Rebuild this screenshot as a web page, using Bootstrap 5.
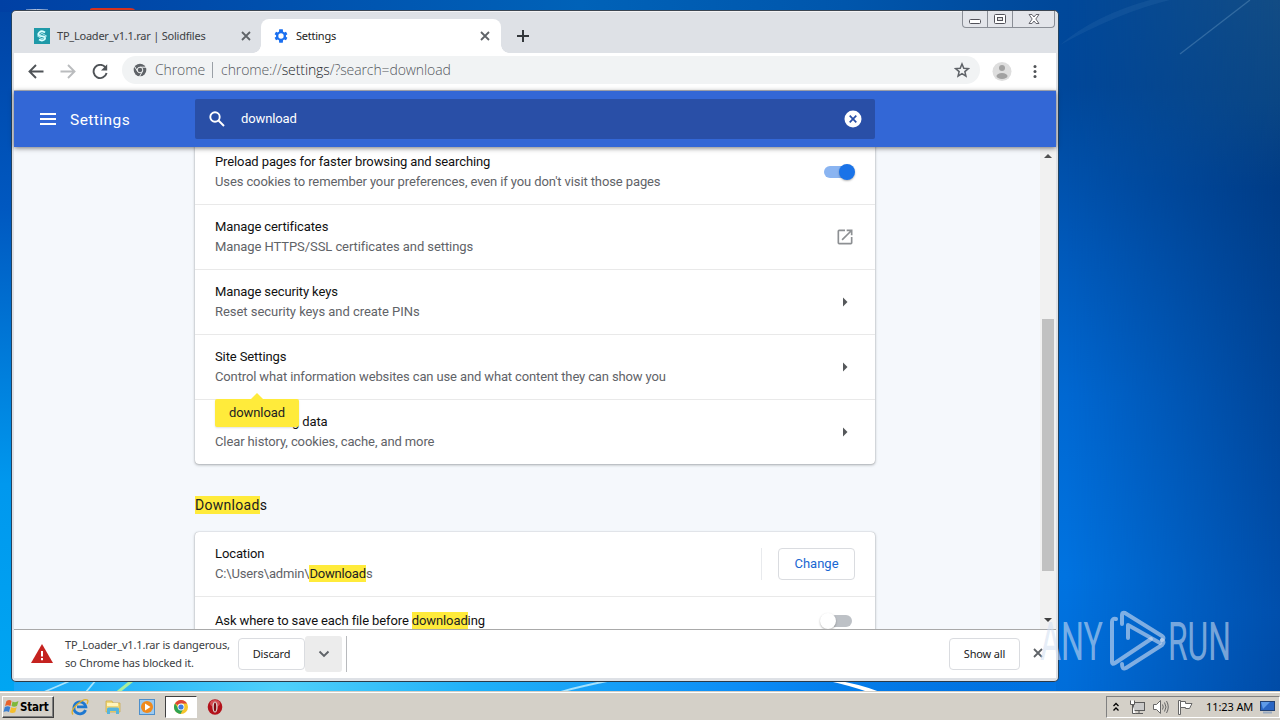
<!DOCTYPE html>
<html lang="en">
<head>
<meta charset="utf-8">
<title>Settings</title>
<link href="https://cdn.jsdelivr.net/npm/bootstrap@5.3.0/dist/css/bootstrap.min.css" rel="stylesheet">
<style>
html,body{height:720px;overflow:hidden}
body{width:1280px;font-family:Roboto,"Liberation Sans",sans-serif;font-size:13px;line-height:20px;color:#111;background:#0060c8}
svg{display:block;flex:none}
.wallpaper{left:0;top:0}
.win{left:11px;top:10px;width:1048px;height:672px;border:1px solid #2b3f55;border-color:#3c4652 #24435f #2c3a48 #24435f;border-radius:5px;background:#dee1e6;padding:0 2px 3px 2px;box-shadow:inset 0 1px #f4f4f6}
.ui{font-family:"Noto Sans","Open Sans",sans-serif}
.strip{height:42px;padding-top:8px}
.tab{height:34px;width:247px;padding:0 9px 0 20px;font-size:11px;letter-spacing:-.23px;color:#3c4043}
.tab.on{width:240px;padding:0 10px 0 12px;background:#fff;border-radius:8px 8px 0 0;color:#222;position:relative}
.tab.on::before,.tab.on::after{content:"";position:absolute;bottom:0;width:8px;height:8px}
.tab.on::before{left:-8px;background:radial-gradient(circle at 0 0,transparent 7.5px,#fff 8px)}
.tab.on::after{right:-8px;background:radial-gradient(circle at 100% 0,transparent 7.5px,#fff 8px)}
.tab span{margin-left:7px}
.caption-btns{top:0;right:3px;width:93px;height:17px;border:1px solid #8a8e96;border-top:0;border-radius:0 0 4px 4px;background:#e3e5ea}
.caption-btns span{border-right:1px solid #8a8e96;height:16px;flex:0 0 25px}
.caption-btns span:last-child{border:0;flex:1}
.tools{height:38px;background:#fff;border-bottom:1px solid #b9bcc6;padding:0 14px 0 14px}
.omni{width:858px;height:28px;margin-left:14px;border-radius:14px;background:#f1f3f4;font-family:"Open Sans","Noto Sans",sans-serif;font-size:14px;font-weight:300;letter-spacing:-.1px;color:#55595e;padding:0 10px 0 11px}
.omni span{position:relative}
.head{height:56px;background:#3367d6;padding-left:24px;color:#fff;z-index:2;box-shadow:0 1px 5px rgba(0,0,0,.55)}
.brand{width:125px;font-size:15.5px;letter-spacing:.45px;padding-top:2px}
.find{width:680px;height:40px;background:#294fa7;border-radius:2px;padding:0 13px;letter-spacing:-.12px}
.view{height:482px;background:#f5f8fc}
.pane{width:680px;margin-left:181px;letter-spacing:-.11px}
.panel{background:#fff;border-radius:4px;box-shadow:0 0 1px rgba(60,64,67,.45),0 1px 3px rgba(60,64,67,.4)}
.line{height:65px;padding:0 20px;border-top:1px solid #e9e9e9}
.sub{color:#5f6368}
.hit{background:#ffeb3b;color:#222;padding:1px 0}
.tip{left:20px;top:260px;width:84px;height:28px;background:#ffeb3b;border-radius:2px;line-height:27px;color:#222;box-shadow:0 1px 2px rgba(0,0,0,.12)}
.tip::before{content:"";position:absolute;left:36px;top:-6px;border:6px solid transparent;border-top:0;border-bottom-color:#ffeb3b}
.sw{width:28px;height:12px;border-radius:6px;background:#8ab4f1;position:relative;margin-right:3px}
.sw i{position:absolute;width:16px;height:16px;border-radius:8px;background:#1a73e8;top:-2px;right:-3px;box-shadow:0 1px 2px rgba(0,0,0,.3)}
.sw.off{background:#bdc1c6}
.sw.off i{background:#fff;right:auto;left:-4px}
.outl{border:1px solid #dadce0;border-radius:4px;background:#fff}
.rail{width:16px;background:#f1f1f1;height:482px;padding:6px 0}
.thumb{width:12px;height:252px;background:#c1c1c1;margin:161px auto 0 2px}
.shelf{height:49px;background:#fff;border-top:1px solid #a9a9a9;font-size:11px;letter-spacing:-.17px;color:#3c4043;padding-left:17px}
.dl{font-size:14px;line-height:20px;font-weight:400;margin-top:31px;letter-spacing:.3px;padding-bottom:17px}
.chg{width:77px;height:32px;line-height:30px;color:#1967d2;letter-spacing:0}
.warn{width:173px;line-height:18px;white-space:nowrap}
.dis{width:67px;height:32px;line-height:30px;color:#222}
.chev{width:37px;height:36px;background:#ececec;border-radius:3px}
.sh{width:71px;height:32px;line-height:30px;color:#222;margin-bottom:1px}
.taskbar{left:0;top:692px;width:1280px;height:28px;background:#d4d0c8;border-top:1px solid #fff;box-shadow:0 -1px #d4d0c8}
.start{width:52px;height:22px;border:1px solid;border-color:#fff #404040 #404040 #fff;box-shadow:inset -1px -1px #808080;font:bold 11.5px/20px "DejaVu Sans Condensed","DejaVu Sans",sans-serif;letter-spacing:-.2px;color:#000}
.press{width:32px;height:22px;background:#fff;border:1px solid;border-color:#404040 #fff #fff #404040}
.tray{width:174px;height:22px;border:1px solid;border-color:#808080 #fff #fff #808080;font-size:11px;letter-spacing:-.1px;color:#000}
.wm{left:1036px;top:604px}
</style>
</head>
<body class="position-relative">
<svg class="wallpaper position-absolute" width="1280" height="720" viewBox="0 0 1280 720">
<defs>
<linearGradient id="b" x1="0" y1="0" x2="0" y2="1"><stop offset="0" stop-color="#0a4aa4"/><stop offset=".45" stop-color="#005cc4"/><stop offset="1" stop-color="#0074e4"/></linearGradient>
<radialGradient id="g" gradientUnits="userSpaceOnUse" cx="280" cy="690" r="780" gradientTransform="translate(0 140) scale(1 .8)"><stop offset="0" stop-color="#50d0fa"/><stop offset=".25" stop-color="#20b0f8"/><stop offset=".6" stop-color="#0c8cf6"/><stop offset="1" stop-color="#0070e0" stop-opacity="0"/></radialGradient>
<linearGradient id="ra" x1="0" y1="0" x2="0" y2="1"><stop offset="0" stop-color="#00489a"/><stop offset=".12" stop-color="#00479a"/><stop offset=".35" stop-color="#0059ba"/><stop offset=".55" stop-color="#0068d2"/><stop offset=".8" stop-color="#0073e0"/><stop offset="1" stop-color="#006cd8"/></linearGradient>
<linearGradient id="rb" x1="0" y1="0" x2="0" y2="1"><stop offset="0" stop-color="#124c84"/><stop offset=".14" stop-color="#0a4684"/><stop offset=".26" stop-color="#003c86"/><stop offset=".5" stop-color="#004496"/><stop offset=".85" stop-color="#004fac"/><stop offset="1" stop-color="#004aa4"/></linearGradient>
<linearGradient id="mh"><stop offset="0" stop-color="#000"/><stop offset=".05" stop-color="#000"/><stop offset="1" stop-color="#fff"/></linearGradient>
<mask id="mk"><rect x="1056" width="224" height="720" fill="url(#mh)"/></mask>
<linearGradient id="l" x1="0" y1="0" x2="0" y2="1"><stop offset="0" stop-color="#0043a4"/><stop offset=".3" stop-color="#0058c0"/><stop offset=".7" stop-color="#0098ee"/><stop offset="1" stop-color="#00a6f2"/></linearGradient>
<linearGradient id="u"><stop offset="0" stop-color="#0040a4"/><stop offset=".55" stop-color="#0062b8"/><stop offset=".8" stop-color="#0056ac"/><stop offset="1" stop-color="#00489a"/></linearGradient>
</defs>
<rect width="1280" height="720" fill="url(#b)"/><rect width="1280" height="720" fill="url(#g)"/>
<rect x="1056" width="224" height="720" fill="url(#ra)"/><rect x="1056" width="224" height="720" fill="url(#rb)" mask="url(#mk)"/>
<rect width="14" height="692" fill="url(#l)"/><rect width="1056" height="12" fill="url(#u)"/>
<path d="M1180 54 1250 0" stroke="#5f93bf" stroke-opacity=".45" stroke-width="1.3"/>
<path d="M1060 45Q1120 12 1170 0H1150Q1095 15 1060 45" fill="#3c79b4" opacity=".2"/>
<path d="M44 692 72 680M86 692l10-12M560 692q22-6 52-12" stroke="#c9f2ff" stroke-width="1.8" opacity=".8"/><path d="M118 692l15-12" stroke="#a9ee9c" stroke-width="3"/>
<path d="M834 680q26 4 46 12h-12q-20-7-44-12z" fill="#fff"/>
<path d="M90 10V9q1-1 3-1h37q4 0 5 2z" fill="#d8321e"/><path d="M26 10q10-1 22 0" stroke="#b7c9e8"/>
</svg>

<main class="win position-absolute d-flex flex-column">
 <div class="strip d-flex ui">
  <div class="tab d-flex align-items-center"><svg width="16" height="16" viewBox="0 0 16 16"><rect width="16" height="16" fill="#1e99a8"/><path d="M11 4.5Q8 2 5.400 4.300T6 7.800l4 .8q2 1.300.3 3Q8 13.400 5 11.500" fill="none" stroke="#d9ffff" stroke-width="1.800"/><path d="M3.500 8 8 11l4.500-3L8 5.400z" fill="none" stroke="#bff2f4" stroke-width=".9"/></svg><span class="flex-grow-1">TP_Loader_v1.1.rar | Solidfiles</span><svg width="12" height="12" viewBox="0 0 12 12"><path d="m2 2 8 8m0-8-8 8" stroke="#5f6368" stroke-width="1.800"/></svg></div>
  <div class="tab on d-flex align-items-center"><svg width="16" height="16" viewBox="0 0 24 24" fill="#1a6ff0"><path d="M19.400 13c.1-.7.1-1.300 0-2l2.200-1.700-2.100-3.700-2.700 1a8 8 0 0 0-1.700-1L14.700 2H9.300l-.4 3.600a8 8 0 0 0-1.700 1l-2.700-1-2.100 3.700L4.600 11v2l-2.200 1.700 2.100 3.700 2.700-1 1.700 1 .4 3.600h5.400l.4-3.600a8 8 0 0 0 1.700-1l2.700 1 2.100-3.700zM12 16a4 4 0 1 1 0-8 4 4 0 0 1 0 8z" fill-rule="evenodd"/></svg><span class="flex-grow-1">Settings</span><svg width="12" height="12" viewBox="0 0 12 12"><path d="m2 2 8 8m0-8-8 8" stroke="#5f6368" stroke-width="1.800"/></svg></div>
  <svg class="ms-3" style="margin-top:11px" width="12" height="12" viewBox="0 0 12 12"><path d="M6 0v12M0 6h12" stroke="#33373b" stroke-width="2"/></svg>
 </div>
 <div class="caption-btns position-absolute d-flex">
  <span><svg width="24" height="16" viewBox="0 0 24 16"><rect x="6.500" y="8.500" width="11" height="4" rx="1" fill="#fff" stroke="#52525a"/></svg></span>
  <span><svg width="24" height="16" viewBox="0 0 24 16"><rect x="6.500" y="3.500" width="11" height="9" rx="1" fill="#fff" stroke="#52525a"/><rect x="9.500" y="6.500" width="5" height="3" fill="#ddd" stroke="#52525a"/></svg></span>
  <span><svg class="mx-auto" width="14" height="16" viewBox="0 0 14 16"><path d="M2 3.500h3L7 6l2-2.500h3L8.800 8l3.200 4.500H9L7 10l-2 2.500H2L5.200 8z" fill="#fff" stroke="#66666e"/></svg></span>
 </div>
 <div class="tools d-flex align-items-center ui">
  <svg width="16" height="16" viewBox="0 0 16 16" fill="none" stroke="#4f5357" stroke-width="1.900"><path d="M15.500 7.500H2M8 1 1.500 7.500 8 14"/></svg>
  <svg class="ms-3" width="16" height="16" viewBox="0 0 16 16" fill="none" stroke="#babcbe" stroke-width="1.900"><path d="M.5 7.500H14M8 1l6.500 6.500L8 14"/></svg>
  <svg class="ms-3" width="16" height="16" viewBox="0 0 16 16"><path d="M13.500 3.500A6.600 6.600 0 1 0 14.600 9.100" fill="none" stroke="#4f5357" stroke-width="1.900"/><path d="M15.200.3v6.300H9z" fill="#4f5357"/></svg>
  <div class="omni d-flex align-items-center mb-1">
   <svg width="14" height="14" viewBox="0 0 14 14"><circle cx="7" cy="7" r="6.300" fill="#5f6368"/><circle cx="7" cy="7" r="2.800" fill="#5f6368" stroke="#f1f3f4"/><path d="M7 4.200h6M4.600 8.400 1.600 3.500M9.400 8.400 6.500 13.500" stroke="#f1f3f4"/></svg>
   <span style="margin-left:8px">Chrome</span><span style="width:1px;height:16px;background:#9aa0a6;margin:0 8px 0 7px"></span><span class="flex-grow-1">chrome://<span class="text-dark">settings</span>/?search=download</span>
   <svg width="16" height="16" viewBox="0 0 24 24"><path d="m12 3 2.700 6.300 6.800.6-5.200 4.500 1.600 6.700-5.900-3.600-5.900 3.600 1.600-6.700-5.200-4.500 6.800-.6z" fill="none" stroke="#5f6368" stroke-width="2.300"/></svg>
  </div>
  <svg style="margin-left:12px" width="20" height="20" viewBox="0 0 20 20"><circle cx="10" cy="9.500" r="9.500" fill="#dedede"/><circle cx="10" cy="6" r="3" fill="#a2a2a2"/><ellipse cx="10" cy="14" rx="5.500" ry="3" fill="#a2a2a2"/></svg>
  <svg style="margin-left:21px" width="4" height="16" viewBox="0 0 4 16" fill="#505357"><circle cx="2" cy="2.500" r="1.500"/><circle cx="2" cy="7.500" r="1.500"/><circle cx="2" cy="12.500" r="1.500"/></svg>
 </div>
 <header class="head d-flex align-items-center position-relative">
  <svg width="20" height="16" viewBox="0 0 20 16"><path d="M2 3h16M2 8h16M2 13h16" stroke="#fff" stroke-width="2"/></svg>
  <span class="brand" style="margin-left:12px">Settings</span>
  <div class="find d-flex align-items-center">
   <svg width="18" height="18" viewBox="0 0 18 18" fill="none" stroke="#fff" stroke-width="1.900"><circle cx="7" cy="7" r="4.700"/><path d="m10.500 10.500 5.500 5.500"/></svg>
   <span class="flex-grow-1" style="margin-left:15px">download</span>
   <svg width="18" height="18" viewBox="0 0 18 18"><circle cx="9" cy="9" r="8.500" fill="#fff"/><path d="m5.700 5.700 6.600 6.600m0-6.600-6.600 6.600" stroke="#294fa7" stroke-width="1.700"/></svg>
  </div>
 </header>
 <div class="view d-flex overflow-hidden">
  <div class="flex-grow-1">
   <div class="pane position-relative" style="margin-top:-8px">
    <div class="panel">
     <div class="line d-flex align-items-center"><div class="flex-grow-1"><div>Preload pages for faster browsing and searching</div><div class="sub">Uses cookies to remember your preferences, even if you don't visit those pages</div></div><div class="sw"><i></i></div></div>
     <div class="line d-flex align-items-center"><div class="flex-grow-1"><div>Manage certificates</div><div class="sub" style="letter-spacing:-.08px">Manage HTTPS/SSL certificates and settings</div></div><svg width="20" height="20" viewBox="0 0 24 24" fill="#8d9093"><path d="M19 19H5V5h7V3H5a2 2 0 0 0-2 2v14a2 2 0 0 0 2 2h14a2 2 0 0 0 2-2v-7h-2zM14 3v2h3.600l-9.800 9.800 1.400 1.400L19 6.400V10h2V3z"/></svg></div>
     <div class="line d-flex align-items-center"><div class="flex-grow-1"><div>Manage security keys</div><div class="sub" style="letter-spacing:-.04px">Reset security keys and create PINs</div></div><svg width="20" height="20" viewBox="0 0 20 20"><path d="m8 5.500 4.500 4.500L8 14.500z" fill="#55585b"/></svg></div>
     <div class="line d-flex align-items-center"><div class="flex-grow-1"><div>Site Settings</div><div class="sub" style="letter-spacing:-.13px">Control what information websites can use and what content they can show you</div></div><svg width="20" height="20" viewBox="0 0 20 20"><path d="m8 5.500 4.500 4.500L8 14.500z" fill="#55585b"/></svg></div>
     <div class="line d-flex align-items-center"><div class="flex-grow-1"><div style="letter-spacing:-.15px">Clear browsing data</div><div class="sub">Clear history, cookies, cache, and more</div></div><svg width="20" height="20" viewBox="0 0 20 20"><path d="m8 5.500 4.500 4.500L8 14.500z" fill="#55585b"/></svg></div>
    </div>
    <div class="tip position-absolute text-center">download</div>
    <h2 class="mb-0 dl"><span class="hit">Download</span>s</h2>
    <div class="panel">
     <div class="line d-flex align-items-center border-top-0" style="height:64px"><div class="flex-grow-1"><div>Location</div><div class="sub" style="letter-spacing:-.17px">C:\Users\admin\<span class="hit">Download</span>s</div></div><div style="width:1px;height:32px;background:#e8eaed;margin-right:16px"></div><div class="outl text-center chg">Change</div></div>
     <div class="line d-flex align-items-center" style="height:49px"><div class="flex-grow-1">Ask where to save each file before <span class="hit">download</span>ing</div><div class="sw off"><i></i></div></div>
    </div>
   </div>
  </div>
  <div class="rail d-flex flex-column"><svg class="mx-auto" width="8" height="5" viewBox="0 0 8 5"><path d="M0 5 4 1l4 4z" fill="#505050"/></svg><div class="thumb"></div><svg class="mx-auto" style="margin-top:47px" width="8" height="5" viewBox="0 0 8 5"><path d="m0 0 4 4 4-4z" fill="#404040"/></svg></div>
 </div>
 <footer class="shelf d-flex align-items-center ui">
  <svg width="22" height="20" viewBox="0 0 22 20"><path d="M11 0 22 19H0z" fill="#c5221f"/><path d="M11 7v5.500M11 14v2.300" stroke="#fff" stroke-width="2"/></svg>
  <div class="warn" style="margin-left:12px">TP_Loader_v1.1.rar is dangerous,<br>so Chrome has blocked it.</div>
  <div class="outl text-center dis">Discard</div><div class="chev d-flex align-items-center justify-content-center"><svg width="12" height="8" viewBox="0 0 12 8"><path d="m1.500 1.500 4.500 4.500 4.500-4.500" fill="none" stroke="#5f6368" stroke-width="1.900"/></svg></div>
  <div style="width:1px;height:36px;background:#b8babd;margin-left:4px"></div>
  <div class="outl text-center sh ms-auto">Show all</div>
  <svg class="mb-1" style="margin:0 12px 0 12px" width="12" height="12" viewBox="0 0 12 12"><path d="m2 3 8 8m0-8-8 8" stroke="#5f6368" stroke-width="1.800"/></svg>
 </footer>
</main>

<nav class="taskbar position-absolute d-flex align-items-center">
 <div class="start d-flex align-items-center" style="margin-left:2px"><svg width="17" height="16" viewBox="0 0 16 16"><path d="M3 2q3-2 5 0L7 7Q4 5.500 1.500 7z" fill="#e8622a"/><path d="M9 2.500q3 1.500 6-.5l-1.500 5q-3 1.500-5.500 0z" fill="#7fb83a"/><path d="M1.300 8q3-1.500 5.500 0l-1.300 5Q3 11.500 0 13z" fill="#3b7fd0"/><path d="M7.700 8.300q3 1.500 5.500 0l-1.500 5q-3 1.500-5.500 0z" fill="#f5be2c"/></svg><span>Start</span></div>
 <svg style="margin-left:17px" width="18" height="18" viewBox="0 0 18 18"><path d="M14.500 12A6 6 0 1 1 14.800 8.800H6" fill="none" stroke="#1e78d0" stroke-width="2.800"/><path d="M2 16.500Q-1 13 6 6.500T16.500 2q1 1-.5 4" fill="none" stroke="#e0b02a" stroke-width="1.300"/></svg>
 <svg style="margin-left:15px" width="18" height="18" viewBox="0 0 18 18"><path d="M2 3h6l1 2h7v9H2z" fill="#f1d776" stroke="#c9a73f" stroke-width=".7"/><path d="M3 5h11v3H3z" fill="#fff4bb"/><path d="M3 16v-5q0-1.500 1.500-1.500h9Q15 9.500 15 11v5h-3v-3H6v3z" fill="#56b4dc"/></svg>
 <svg style="margin-left:17px" width="16" height="16" viewBox="0 0 16 16"><rect x=".5" y=".5" width="15" height="15" fill="#9ccaf0" stroke="#4d8fcb"/><circle cx="8" cy="8" r="6" fill="#f08a1c"/><path d="m6 4.500 5.500 3.500L6 11.500z" fill="#fff"/></svg>
 <div class="press d-flex align-items-center justify-content-center" style="margin-left:10px"><svg width="14" height="14" viewBox="0 0 14 14"><circle cx="7" cy="7" r="7" fill="#f6c52c"/><path d="M7 7 1 3.400A7 7 0 0 1 13 3.400H7z" fill="#dd4538"/><path d="M1 3.400A7 7 0 0 0 6.500 14L9.500 8.500 7 7 4.500 8.500z" fill="#2ea352"/><circle cx="7" cy="7" r="3.400" fill="#fff"/><circle cx="7" cy="7" r="2.600" fill="#3f7de0"/></svg></div>
 <svg style="margin-left:10px" width="16" height="16" viewBox="0 0 16 16"><ellipse cx="8" cy="8" rx="7.300" ry="7.700" fill="#b3121b"/><ellipse cx="8" cy="4.500" rx="5" ry="3.500" fill="#e8787b" opacity=".6"/><ellipse cx="8" cy="8" rx="2.600" ry="5.600" fill="#dcd3d0"/><ellipse cx="8" cy="8" rx="1.200" ry="4.600" fill="#7e0a10"/></svg>
 <div class="tray d-flex align-items-center ms-auto ui" style="padding-left:6px">
  <svg width="6" height="10" viewBox="0 0 6 10" fill="none" stroke="#000" stroke-width="1.300"><path d="m.5 4 2.500-2.500L5.500 4M.5 8.500 3 6l2.500 2.500"/></svg>
  <svg style="margin-left:10px" width="16" height="16" viewBox="0 0 16 16"><rect x="4.500" y="3.500" width="11" height="8" fill="#c9c9c9" stroke="#5b5b5b"/><path d="M6 14.500h8M10 12v2" stroke="#5b5b5b"/><path d="M1.500 1.500v4h4v-4M3.500 5.500v9h3" fill="#fff" stroke="#5b5b5b"/></svg>
  <svg style="margin-left:8px" width="16" height="16" viewBox="0 0 16 16" fill="none" stroke="#666"><path d="M.5 5.500h3l4-4v13l-4-4h-3z" fill="#fff"/><path d="M9.500 5.500q1.500 2.500 0 5M11.500 3.500q3 4.500 0 9M13.500 2q3.500 6 0 12"/></svg>
  <svg style="margin-left:8px" width="16" height="16" viewBox="0 0 16 16" fill="#fff" stroke="#666"><path d="M1.500 15.500v-14h2v14z"/><path d="M3.500 2.500h5v2h6.500l-2.500 5h-4v-1h-5z"/></svg>
  <span class="text-nowrap" style="margin-left:13px">11:23 AM</span>
  <svg style="margin-left:7px" width="15" height="15" viewBox="0 0 15 15"><rect x=".5" y="2.500" width="14" height="9" fill="#2a66c4" stroke="#234274"/><path d="M1 3h9L3 10z" fill="#5f9be8"/><path d="M3 13.500h9" stroke="#9aabc0" stroke-width="2"/></svg>
 </div>
</nav>

<svg class="wm position-absolute" width="220" height="74" viewBox="1036 604 220 74" font-family="Roboto" font-size="53" font-weight="400">
<g fill="#d3e0f2" fill-opacity=".58"><text x="1040" y="660" textLength="63" lengthAdjust="spacingAndGlyphs">ANY</text><text x="1168" y="660" textLength="63" lengthAdjust="spacingAndGlyphs">RUN</text></g>
<g fill="none" stroke="#d3e0f2" stroke-opacity=".6" stroke-width="4" stroke-linejoin="round" stroke-linecap="round"><path d="M1116 619q-4-1-4 3v40q0 3 3 1l36-24"/><path d="M1128 638v-13l32 18"/><path d="M1122 624v-9q0-3 3-2l37 23q3 2 0 4"/><path d="M1122 664q0 6 4 4l36-23q3-3 0-5"/></g>
</svg>
<script src="https://cdn.jsdelivr.net/npm/bootstrap@5.3.0/dist/js/bootstrap.bundle.min.js"></script>
</body>
</html>
